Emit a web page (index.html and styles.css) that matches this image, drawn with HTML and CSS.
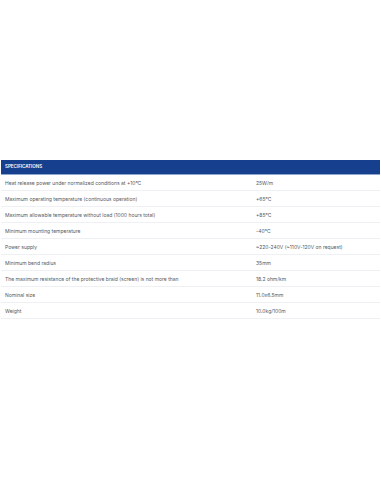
FILE: index.html
```html
<!DOCTYPE html>
<html lang="en">
<head>
<meta charset="utf-8">
<title>Specifications</title>
<link rel="stylesheet" href="styles.css">
</head>
<body>
<div class="page">
  <div class="specs">
    <div class="specs-head">SPECIFICATIONS</div>
    <div class="row"><div class="name">Heat release power under normalized conditions at +10°C</div><div class="val">25W/m</div></div>
    <div class="row"><div class="name">Maximum operating temperature (continuous operation)</div><div class="val">+65°C</div></div>
    <div class="row"><div class="name">Maximum allowable temperature without load (1000 hours total)</div><div class="val">+85°C</div></div>
    <div class="row"><div class="name">Minimum mounting temperature</div><div class="val">-40°C</div></div>
    <div class="row"><div class="name">Power supply</div><div class="val">~220-240V (~110V-120V on request)</div></div>
    <div class="row"><div class="name">Minimum bend radius</div><div class="val">35mm</div></div>
    <div class="row"><div class="name">The maximum resistance of the protective braid (screen) is not more than</div><div class="val">18.2 ohm/km</div></div>
    <div class="row"><div class="name">Nominal size</div><div class="val">11.0x6.5mm</div></div>
    <div class="row"><div class="name">Weight</div><div class="val">10.0kg/100m</div></div>
  </div>
</div>
</body>
</html>
```
FILE: styles.css
```css
html, body {
  margin: 0;
  padding: 0;
  background: #ffffff;
}
.page {
  padding: 160px 1px 0 1px;
  font-family: "Inter", "Noto Sans", sans-serif;
}
.specs {
  display: flex;
  flex-direction: column;
}
.specs-head {
  background: #163f8e;
  color: #ffffff;
  font-size: 4.6px;
  font-weight: 600;
  height: 14px;
  line-height: 14px;
  padding: 0 4px;
  border-bottom: 1px solid #8fa6cf;
  letter-spacing: -0.05px;
}
.row {
  display: grid;
  grid-template-columns: 251px 1fr;
  height: 15px;
  align-items: center;
  border-bottom: 1px solid #eef0f4;
  font-size: 5px;
  color: #555a60;
}
.name, .val {
  padding: 0 4px;
  white-space: nowrap;
}
```
